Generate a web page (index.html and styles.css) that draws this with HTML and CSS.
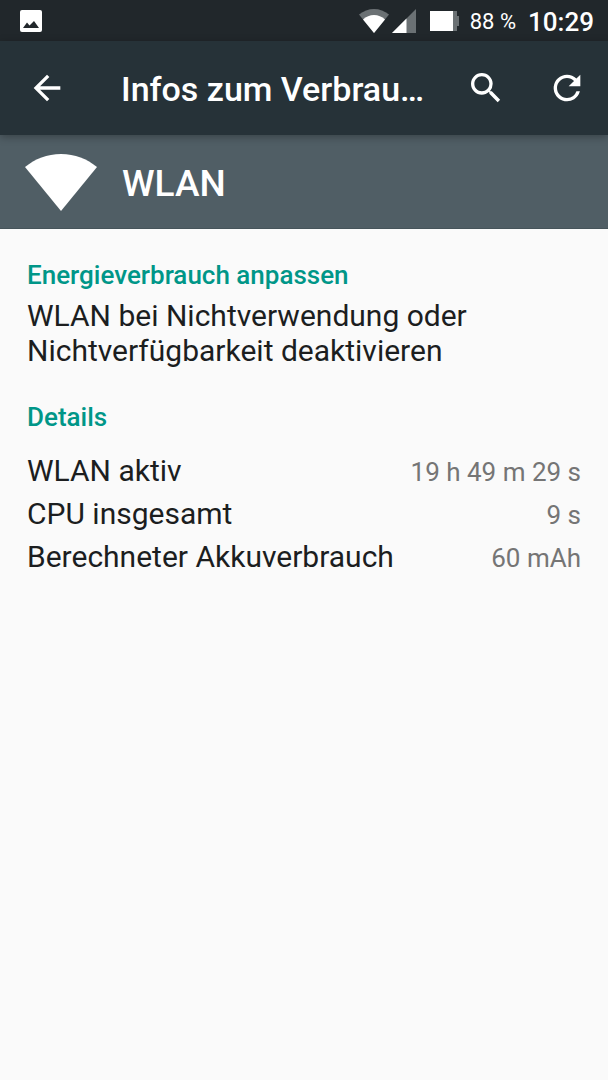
FILE: index.html
```html
<!DOCTYPE html>
<html lang="de">
<head>
    <meta charset="UTF-8">
    <meta name="viewport" content="width=device-width, initial-scale=1.0">
    <title>Infos zum Verbrauch</title>
    <link rel="stylesheet" href="styles.css">
</head>
<body>
    <div class="statusbar">
        <svg class="status-image" viewBox="0 0 22 22" aria-hidden="true">
            <rect width="22" height="22" rx="2" fill="#fff"/>
            <path d="M3 18l4-5.500 2.500 3L14 11l5 7z" fill="#21272b"/>
        </svg>
        <div class="status-right">
            <svg class="status-wifi" viewBox="0 0 30 24" aria-hidden="true">
                <path d="M15 24L0 5.500C4.500 2 9.500 0 15 0s10.500 2 15 5.500z" fill="#6b7174"/>
                <path d="M15 24L4 10.500C7 7.500 11 6 15 6s8 1.500 11 4.500z" fill="#fff"/>
            </svg>
            <svg class="status-signal" viewBox="0 0 24 24" aria-hidden="true">
                <path d="M0 24L24 0v24z" fill="#6b7174"/>
                <path d="M0 24L14.500 9.500V24z" fill="#fff"/>
            </svg>
            <svg class="status-battery" viewBox="0 0 29 20" aria-hidden="true">
                <path d="M23 0h4v5h2v10h-2v5h-4z" fill="#6b7174"/>
                <path d="M0 0h23v20H0z" fill="#fff"/>
            </svg>
            <span class="percent">88 %</span>
            <span class="clock">10:29</span>
        </div>
    </div>

    <header class="appbar">
        <button class="icon-btn" type="button" aria-label="Zurück">
            <svg viewBox="0 0 24 24"><path d="M20 11H7.830l5.590-5.590L12 4l-8 8 8 8 1.410-1.410L7.830 13H20z"/></svg>
        </button>
        <h1>Infos zum Verbrau…</h1>
        <div class="actions">
            <button class="icon-btn" type="button" aria-label="Suchen">
                <svg viewBox="0 0 24 24"><path d="M15.500 14h-.79l-.28-.27A6.471 6.471 0 0 0 16 9.500 6.500 6.500 0 1 0 9.500 16c1.610 0 3.090-.59 4.230-1.570l.27.28v.79l5 4.990L20.490 19zm-6 0C7.010 14 5 11.990 5 9.500S7.010 5 9.500 5 14 7.010 14 9.500 11.990 14 9.500 14z"/></svg>
            </button>
            <button class="icon-btn" type="button" aria-label="Aktualisieren">
                <svg viewBox="0 0 24 24"><path d="M17.650 6.350A7.958 7.958 0 0 0 12 4a8 8 0 1 0 7.730 10h-2.080A5.990 5.990 0 0 1 12 18c-3.310 0-6-2.690-6-6s2.690-6 6-6c1.660 0 3.140.69 4.220 1.780L13 11h7V4z"/></svg>
            </button>
        </div>
    </header>

    <div class="banner">
        <svg class="banner-wifi" viewBox="0 0 72 58" aria-hidden="true">
            <path d="M36 57L0 13C10 5 22 0 36 0s26 5 36 13z" fill="#fff"/>
        </svg>
        <h2>WLAN</h2>
    </div>

    <main class="content">
        <section class="adjust">
            <h3>Energieverbrauch anpassen</h3>
            <p>WLAN bei Nichtverwendung oder Nichtverfügbarkeit deaktivieren</p>
        </section>
        <section class="details">
            <h3>Details</h3>
            <dl>
                <div class="row">
                    <dt>WLAN aktiv</dt>
                    <dd>19 h 49 m 29 s</dd>
                </div>
                <div class="row">
                    <dt>CPU insgesamt</dt>
                    <dd>9 s</dd>
                </div>
                <div class="row">
                    <dt>Berechneter Akkuverbrauch</dt>
                    <dd>60 mAh</dd>
                </div>
            </dl>
        </section>
    </main>
</body>
</html>
```

FILE: styles.css
```css
:root {
    --status-bg: #21272b;
    --appbar-bg: #263238;
    --banner-bg: #505e65;
    --page-bg: #fafafa;
    --accent: #009688;
    --text: #1c1e1f;
    --text-light: #757575;
}

* {
    box-sizing: border-box;
}

body {
    margin: 0;
    min-height: 100vh;
    font-family: Roboto, sans-serif;
    background-color: var(--page-bg);
    color: var(--text);
}

h1, h2, h3, p, dl, dd {
    margin: 0;
}

.statusbar {
    display: flex;
    align-items: center;
    justify-content: space-between;
    height: 41px;
    padding: 0 14px 0 20px;
    background-color: var(--status-bg);
    color: #fff;
}

.statusbar svg {
    display: block;
}

.status-image {
    width: 22px;
    height: 22px;
}

.status-right {
    display: flex;
    align-items: center;
}

.status-wifi {
    width: 30px;
    height: 24px;
    margin-right: 3px;
}

.status-signal {
    width: 24px;
    height: 24px;
    margin-right: 14px;
}

.status-battery {
    width: 29px;
    height: 20px;
    margin-right: 11px;
}

.percent,
.clock {
    padding-top: 2px;
}

.percent {
    font-size: 22px;
    margin-right: 12px;
}

.clock {
    font-size: 26px;
    font-weight: 500;
}

.appbar {
    position: relative;
    display: flex;
    align-items: center;
    height: 94px;
    padding: 0 21px 0 27px;
    background-color: var(--appbar-bg);
    color: #fff;
    box-shadow: 0 2px 8px rgba(0, 0, 0, 0.3);
}

.appbar h1 {
    flex: 1;
    margin-left: 54px;
    padding-top: 1px;
    font-size: 34px;
    font-weight: 500;
    white-space: nowrap;
}

.actions {
    display: flex;
    gap: 41px;
}

.icon-btn {
    width: 40px;
    height: 40px;
    padding: 0;
    border: none;
    background: none;
    color: inherit;
    cursor: pointer;
}

.icon-btn svg {
    display: block;
    width: 40px;
    height: 40px;
    fill: currentColor;
}

.banner {
    display: flex;
    align-items: center;
    height: 94px;
    padding: 3px 25px 0;
    background-color: var(--banner-bg);
    border-bottom: 1px solid #46545a;
    color: #fff;
}

.banner-wifi {
    width: 72px;
    height: 58px;
    margin-right: 25px;
}

.banner h2 {
    font-size: 37px;
    font-weight: 500;
}

.content {
    padding: 29px 27px;
}

.content h3 {
    font-size: 26px;
    line-height: 34px;
    font-weight: 500;
    color: var(--accent);
}

.adjust p {
    margin-top: 6px;
    font-size: 30px;
    line-height: 35px;
}

.details {
    margin-top: 32px;
}

.details dl {
    margin-top: 16px;
}

.row {
    display: flex;
    align-items: baseline;
    justify-content: space-between;
    line-height: 42px;
}

.row dt {
    font-size: 30px;
}

.row dd {
    font-size: 26px;
    color: var(--text-light);
}
```
